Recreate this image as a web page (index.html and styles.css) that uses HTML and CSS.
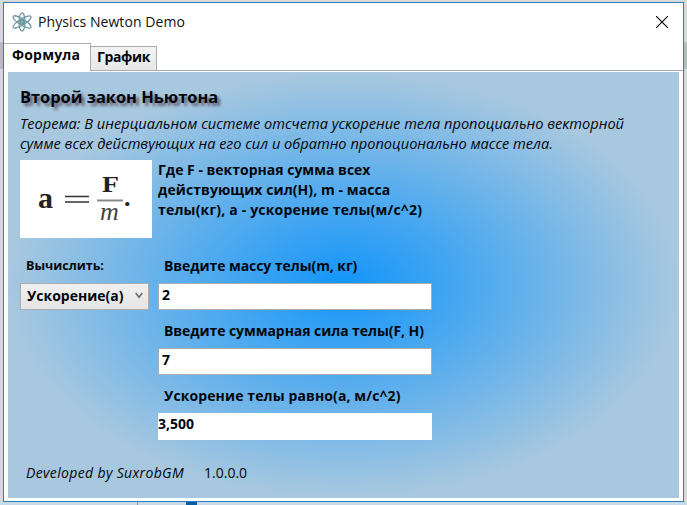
FILE: index.html
```
<!DOCTYPE html>
<html lang="ru">
<head>
<meta charset="utf-8">
<title>Physics Newton Demo</title>
<link rel="stylesheet" href="styles.css">
</head>
<body>
<div class="desktop">
<div class="window">
  <header class="titlebar">
    <svg class="atom" viewBox="0 0 20 20" width="20" height="20"><g fill="none" stroke="#6d9aa1" stroke-width="1.2"><ellipse cx="10" cy="10" rx="3" ry="9.2"/><ellipse cx="10" cy="10" rx="3" ry="10.4" transform="rotate(58 10 10)"/><ellipse cx="10" cy="10" rx="3" ry="10.4" transform="rotate(-58 10 10)"/></g><circle cx="10" cy="10" r="2.2" fill="#8fb5a8" stroke="#4d7f88"/></svg>
    <span class="caption">Physics Newton Demo</span>
    <svg class="close" viewBox="0 0 12 12" width="12" height="12"><path d="M0 0L12 12M12 0L0 12" stroke="#000" stroke-width="1.1"/></svg>
  </header>
  <nav class="tabs"><div class="tab active"><span>Формула</span></div><div class="tab"><span>График</span></div><div class="rule"></div></nav>
  <main class="page">
    <h1><span>Второй закон Ньютона</span></h1>
    <p class="theorem"><span class="t1">Теорема: В инерциальном системе отсчета ускорение тела пропоциально векторной</span><br><span class="t2">сумме всех действующих на его сил и обратно пропоционально массе тела.</span></p>
    <section class="law">
      <svg class="formula" viewBox="0 0 132 78" width="132" height="78"><rect width="132" height="78" fill="#fff"/><g font-family="Liberation Serif, serif" fill="#222"><text x="18" y="48" font-size="30" font-weight="bold">a</text><text x="82" y="32" font-size="23" font-weight="bold" textLength="17" lengthAdjust="spacingAndGlyphs">F</text><text x="80" y="60" font-size="26" font-style="italic" fill="#444">m</text><text x="104" y="46" font-size="26" font-weight="bold">.</text></g><path d="M45 36.5H69M45 42H69" stroke="#333" stroke-width="1.6"/><path d="M77 40.5H103" stroke="#888" stroke-width="2"/></svg>
      <p class="legend"><span class="g1">Где F - векторная сумма всех</span><br><span class="g2">действующих сил(Н), m - масса</span><br><span class="g3">телы(кг), а - ускорение телы(м/с^2)</span></p>
    </section>
    <section class="calc">
      <div class="mode"><label class="small"><span>Вычислить:</span></label><div class="combo"><span>Ускорение(а)</span><svg viewBox="0 0 8 7" width="8" height="7"><path d="M.7 1L4 5.2L7.3 1" fill="none" stroke="#666" stroke-width="1.5"/></svg></div></div>
      <div class="fields">
        <label><span class="f1">Введите массу телы(m, кг)</span></label><div class="box">2</div>
        <label><span class="f2">Введите суммарная сила телы(F, Н)</span></label><div class="box">7</div>
        <label><span class="f3">Ускорение телы равно(а, м/с^2)</span></label><div class="box result"><span>3,500</span></div>
      </div>
    </section>
    <footer><em>Developed by SuxrobGM</em><span class="version">1.0.0.0</span></footer>
  </main>
</div>
<div class="taskstrip"><i class="divider"></i><i class="badge"></i></div>
</div>
</body>
</html>
```
FILE: styles.css
```
* { box-sizing: border-box; }
body { margin: 0; font: 14px/20px "Open Sans", "Noto Sans", sans-serif; color: #02060c; }
span, em { white-space: nowrap; }
.desktop { width: 687px; height: 505px; padding: 2px 3px 0; background: linear-gradient(#d8d8da 42px, #b9babd 42px, #b9babd 69px, #d8d8da 69px); overflow: hidden; }
.window { width: 681px; height: 500px; border: 1px solid #2a80b9; background: #fff; display: flex; flex-direction: column; }
.titlebar { height: 37px; display: flex; align-items: center; padding: 0 15px 0 8px; flex: none; }
.caption { margin-left: 6px; color: #111; letter-spacing: .08px; }
.close { margin-left: auto; }
.tabs { height: 31px; flex: none; display: flex; align-items: flex-end; font-weight: 700; }
.tab { width: 66px; height: 25px; border: 1px solid #acacac; border-left: 0; background: linear-gradient(#f2f2f2, #e8e8e8); padding: 0 6px; letter-spacing: -.4px; }
.tab.active { width: 87px; height: 28px; background: #fff; border-bottom: 0; padding: 1px 8px; letter-spacing: .2px; }
.rule { flex: 1; border-bottom: 1px solid #a0a8b0; }
.page { margin: 0 4px; height: 427px; flex: none; padding: 14px 12px 0; border-top: 1px solid #fff; background: radial-gradient(ellipse closest-side, #1295fa, #a8c8df 100%); }
h1 { margin: 0; height: 27px; font-size: 16.4px; line-height: 22px; font-weight: 700; text-shadow: 3px 3px 3px rgba(70, 45, 60, .7); }
p { margin: 0; }
.theorem { height: 47px; font-style: italic; font-size: 14.6px; }
.law { display: flex; gap: 6px; height: 96px; }
.calc { display: flex; gap: 9px; height: 207px; font-weight: 700; }
.mode { width: 129px; }
.legend { font-weight: 700; }
.g2 { letter-spacing: .08px; }
.g3 { letter-spacing: .18px; }
.f1, .f2 { letter-spacing: -.07px; }
.f3 { letter-spacing: .11px; }
label { display: block; height: 27px; padding-left: 6px; }
.small { font-size: 12.5px; }
.combo { height: 27px; border: 1px solid #acacac; background: linear-gradient(#f0f0f0, #e5e5e5); display: flex; padding: 2px 5px 3px 6px; justify-content: space-between; }
.combo svg { margin-top: 6px; }
.fields { width: 274px; }
.box { height: 27px; background: #fff; border: 1px solid #abadb3; padding: 1px 3px; margin-bottom: 11px; }
.result { border: 0; padding: 1px 0; }
footer { padding-left: 6px; display: flex; gap: 20px; font-size: 14px; }
footer em { letter-spacing: .35px; }
.taskstrip { height: 3px; margin: 0 -3px; background: #c9d9e8; display: flex; }
.divider { width: 1px; margin-left: 137px; background: #8797a6; }
.badge { width: 11px; margin-left: 48px; background: #0b5da6; }
```
